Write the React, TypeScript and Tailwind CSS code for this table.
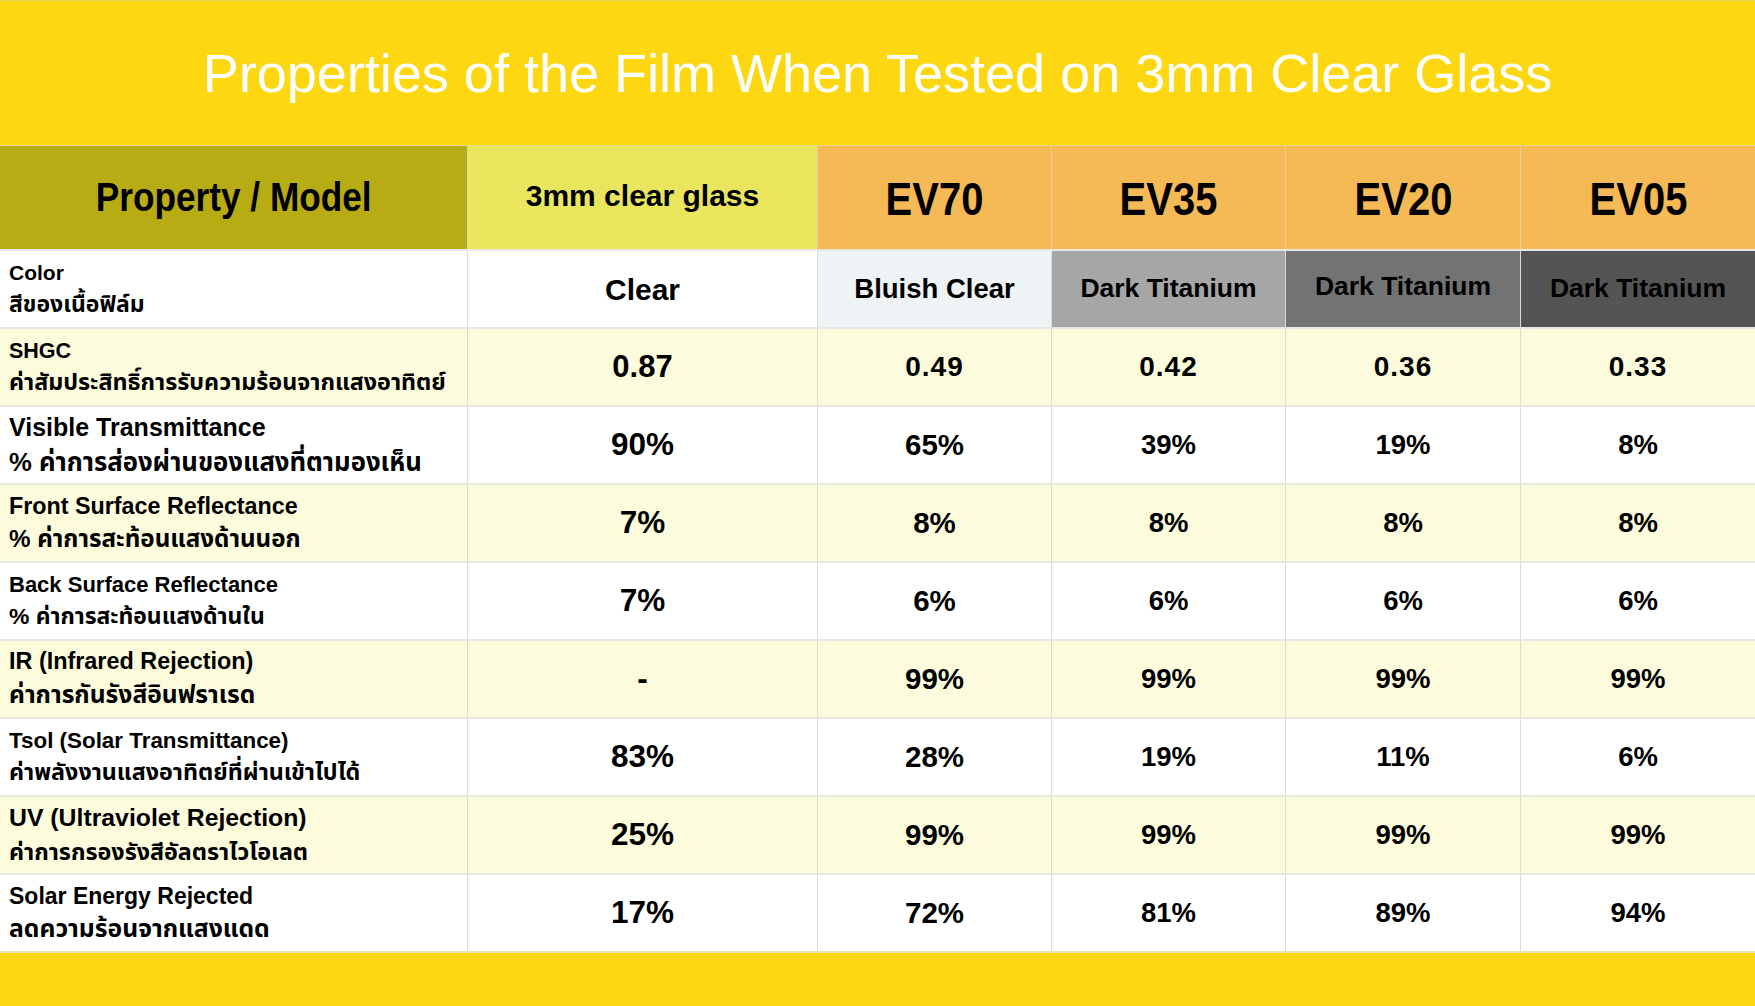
import React from 'react';

const sans = "font-['Liberation_Sans','Noto_Sans','Noto_Sans_Thai',sans-serif]";

type Row = {
  en: string;
  th: string;
  size: string;
  thSize: string;
  values: string[];
};

const rows: Row[] = [
  { en: 'Color', th: 'สีของเนื้อฟิล์ม', size: 'text-[21px]', thSize: 'text-[23px]', values: ['Clear', 'Bluish Clear', 'Dark Titanium', 'Dark Titanium', 'Dark Titanium'] },
  { en: 'SHGC', th: 'ค่าสัมประสิทธิ์การรับความร้อนจากแสงอาทิตย์', size: 'text-[21.5px]', thSize: 'text-[23.3px]', values: ['0.87', '0.49', '0.42', '0.36', '0.33'] },
  { en: 'Visible Transmittance', th: '% ค่าการส่องผ่านของแสงที่ตามองเห็น', size: 'text-[25px]', thSize: 'text-[25.7px]', values: ['90%', '65%', '39%', '19%', '8%'] },
  { en: 'Front Surface Reflectance', th: '% ค่าการสะท้อนแสงด้านนอก', size: 'text-[23.3px]', thSize: 'text-[24.2px]', values: ['7%', '8%', '8%', '8%', '8%'] },
  { en: 'Back Surface Reflectance', th: '% ค่าการสะท้อนแสงด้านใน', size: 'text-[22px]', thSize: 'text-[22.9px]', values: ['7%', '6%', '6%', '6%', '6%'] },
  { en: 'IR (Infrared Rejection)', th: 'ค่าการกันรังสีอินฟราเรด', size: 'text-[23.4px]', thSize: 'text-[24.6px]', values: ['-', '99%', '99%', '99%', '99%'] },
  { en: 'Tsol (Solar Transmittance)', th: 'ค่าพลังงานแสงอาทิตย์ที่ผ่านเข้าไปได้', size: 'text-[22.4px]', thSize: 'text-[23.3px]', values: ['83%', '28%', '19%', '11%', '6%'] },
  { en: 'UV (Ultraviolet Rejection)', th: 'ค่าการกรองรังสีอัลตราไวโอเลต', size: 'text-[24.8px]', thSize: 'text-[23.3px]', values: ['25%', '99%', '99%', '99%', '99%'] },
  { en: 'Solar Energy Rejected', th: 'ลดความร้อนจากแสงแดด', size: 'text-[23px]', thSize: 'text-[24.7px]', values: ['17%', '72%', '81%', '89%', '94%'] },
];

const colorBgs = ['bg-white', 'bg-[#eef3f6]', 'bg-[#a6a6a6]', 'bg-[#737373]', 'bg-[#545454]'];
const models = ['EV70', 'EV35', 'EV20', 'EV05'];
const grid = 'grid grid-cols-[467px_350px_234px_234px_235px_235px]';

function ValueCell({ value, col, row }: { value: string; col: number; row: number }) {
  let size = col === 0 ? 'text-[31.5px]' : col === 1 ? 'text-[29.5px]' : 'text-[27.5px]';
  let extra = '';
  if (row === 0) size = col === 0 ? 'text-[30px]' : col === 1 ? 'text-[27.5px]' : 'text-[26.5px]';
  if (row === 1) {
    size = col === 0 ? 'text-[31px]' : 'text-[28px]';
    extra = col === 0 ? '' : 'tracking-[1px]';
  }
  const bg = row === 0 ? colorBgs[col] : '';
  const shift = row === 0 && col === 3 ? 'pb-[5px]' : '';
  return (
    <div
      className={`flex items-center justify-center border-l border-[#dcdcd6] ${bg} ${sans} ${size} ${extra} ${shift} font-bold text-black`}
    >
      {value}
    </div>
  );
}

export default function App() {
  return (
    <div className="flex h-[1006px] w-[1755px] flex-col overflow-hidden bg-[#fdd812]">
      <div className="flex h-[145px] items-center justify-center border-t border-[#eed75a]">
        <h1 className={`${sans} text-[54px] text-white`}>
          Properties of the Film When Tested on 3mm Clear Glass
        </h1>
      </div>

      <div className={`${grid} h-[104px] border-t border-[#e6d987]`}>
        <div className={`flex items-center justify-center bg-[#b8ac14] pb-[2px] ${sans} text-[40px] font-bold text-black`}>
          <span className="inline-block scale-x-[0.88]">Property / Model</span>
        </div>
        <div className={`flex items-center justify-center border-l border-[#dedba0] bg-[#e9e65e] pb-[4px] ${sans} text-[30px] font-bold text-black`}>
          3mm clear glass
        </div>
        {models.map((m) => (
          <div
            key={m}
            className={`flex items-center justify-center border-l border-[#e8cfa2] bg-[#f5b955] pt-[3px] ${sans} text-[47px] font-bold text-black`}
          >
            <span className="inline-block scale-x-[0.85]">{m}</span>
          </div>
        ))}
      </div>

      <div className="flex flex-col">
        {rows.map((r, i) => (
          <div
            key={r.en}
            className={`${grid} h-[78px] border-t-2 border-[#e8e8e2] ${i % 2 === 1 ? 'bg-[#fcfcdc]' : 'bg-white'}`}
          >
            <div className={`flex flex-col justify-center px-[9px] ${sans} font-bold leading-[1.4] text-black`}>
              <span className={r.size}>{r.en}</span>
              <span className={r.thSize}>{r.th}</span>
            </div>
            {r.values.map((v, c) => (
              <ValueCell key={c} value={v} col={c} row={i} />
            ))}
          </div>
        ))}
      </div>

      <div className="flex-1 border-t-2 border-[#e8e4b0] bg-[#fdd812]" />
    </div>
  );
}
